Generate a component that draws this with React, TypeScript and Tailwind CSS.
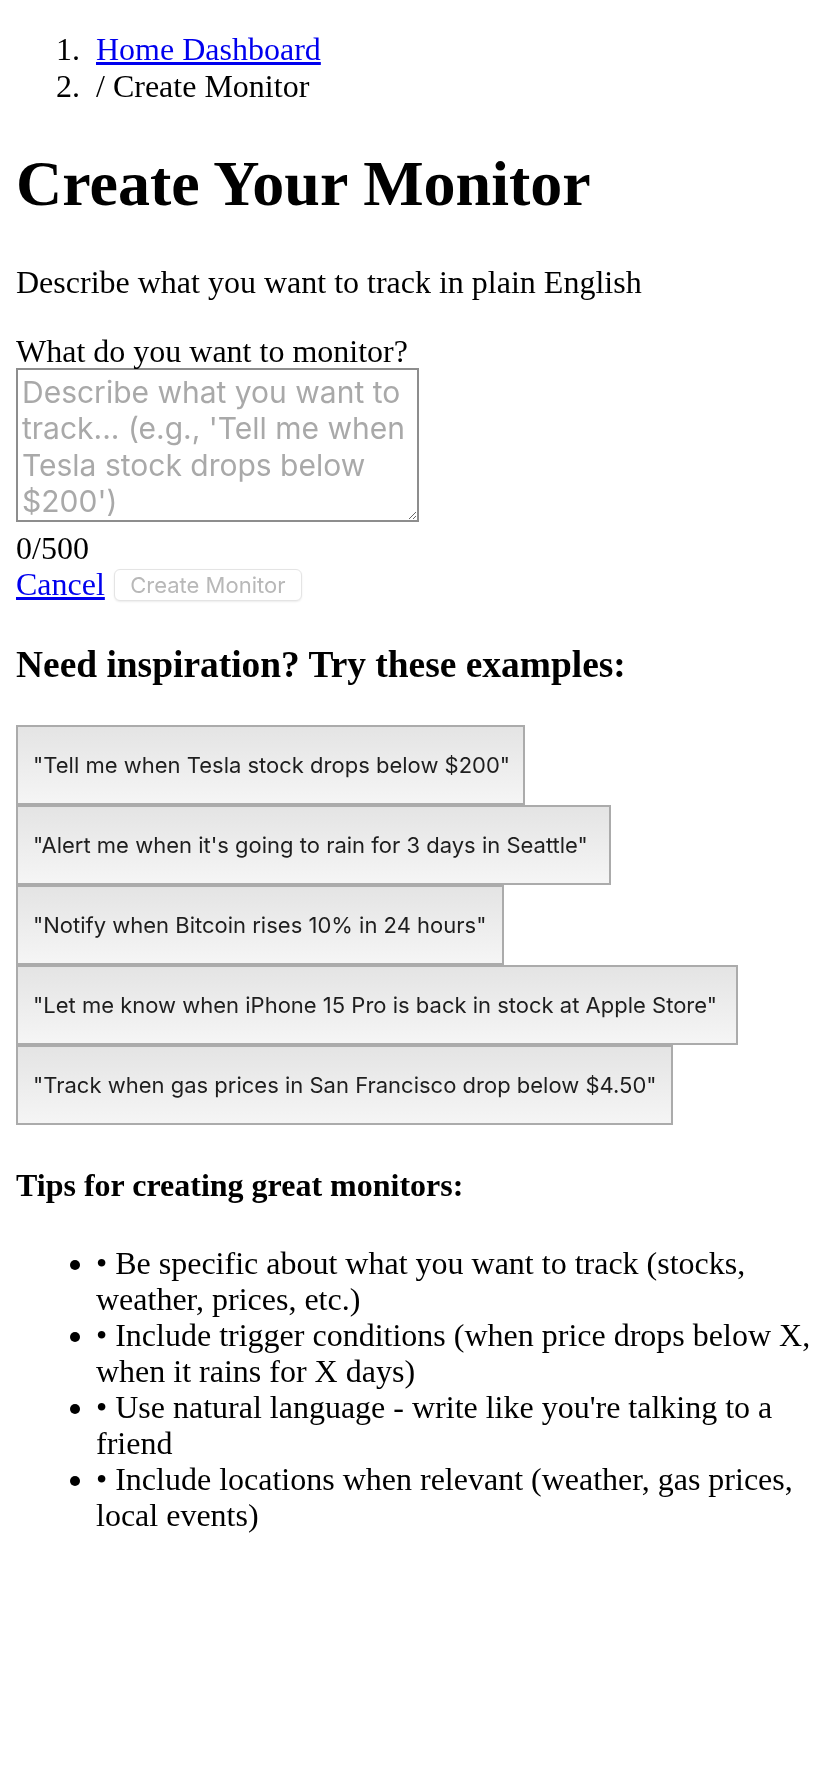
import React from "react";

const examples = [
  { text: '"Tell me when Tesla stock drops below $200"', w: "w-[509px]" },
  { text: '"Alert me when it\'s going to rain for 3 days in Seattle"', w: "w-[595px]" },
  { text: '"Notify when Bitcoin rises 10% in 24 hours"', w: "w-[488px]" },
  { text: '"Let me know when iPhone 15 Pro is back in stock at Apple Store"', w: "w-[722px]" },
  { text: '"Track when gas prices in San Francisco drop below $4.50"', w: "w-[657px]" },
];

const tips = [
  "• Be specific about what you want to track (stocks, weather, prices, etc.)",
  "• Include trigger conditions (when price drops below X, when it rains for X days)",
  "• Use natural language - write like you're talking to a friend",
  "• Include locations when relevant (weather, gas prices, local events)",
];

export default function App() {
  return (
    <div className="bg-white min-h-[1792px] px-4 pb-4 text-black font-['Liberation_Serif','Times_New_Roman',serif] text-[32px] leading-[1.15]">
      <nav>
        <ol className="mt-[31px] mb-[32px]">
          <li className="flex">
            <span className="w-[80px] pl-[40px] shrink-0">1.</span>
            <a href="#" className="text-[#0000ee] underline">
              Home Dashboard
            </a>
          </li>
          <li className="flex">
            <span className="w-[80px] pl-[40px] shrink-0">2.</span>
            <span>/ Create Monitor</span>
          </li>
        </ol>
      </nav>

      <h1 className="text-[64px] font-bold my-[42.88px] leading-[1.15]">Create Your Monitor</h1>
      <p className="my-[32px]">Describe what you want to track in plain English</p>

      <div className="my-[32px]">
        <label className="block" htmlFor="monitor">
          What do you want to monitor?
        </label>
        <textarea
          id="monitor"
          rows={4}
          className="block mt-[-2px] mb-[8px] w-[403px] h-[154px] border-2 border-[#8d8d8d] bg-white px-[4px] py-[4px] text-[30px] leading-[36.5px] text-black font-['Inter','Liberation_Sans',sans-serif] placeholder:text-[#a9a9a9] outline-none"
          placeholder={"Describe what you want to\ntrack... (e.g., 'Tell me when\nTesla stock drops below\n$200')"}
        />
        <div>0/500</div>
        <div className="flex items-center gap-[9px] h-[36.8px]">
          <a href="#" className="text-[#0000ee] underline">
            Cancel
          </a>
          <button
            disabled
            className="w-[188px] h-[32px] rounded-[6px] border border-[#e4e4e4] bg-white shadow-[0_1px_2px_rgba(0,0,0,0.08)] text-[22px] leading-none text-[#b8b8b8] font-['Inter','Liberation_Sans',sans-serif] flex items-center justify-center"
          >
            Create Monitor
          </button>
        </div>
      </div>

      <h3 className="text-[37.44px] font-bold mt-[39.5px] mb-[39.5px] leading-[1.15]">
        Need inspiration? Try these examples:
      </h3>

      <div className="flex flex-col items-start">
        {examples.map((e) => (
          <button
            key={e.text}
            className={`${e.w} h-[80px] border-2 border-[#ababab] bg-linear-to-b from-[#e4e4e4] to-[#f5f5f5] pl-[15px] text-left text-[22px] leading-none text-[#1e1e1e] font-['Inter','Liberation_Sans',sans-serif] whitespace-nowrap`}
          >
            {e.text}
          </button>
        ))}
      </div>

      <h4 className="text-[32px] font-bold mt-[41.5px] mb-[42px] leading-[1.15]">Tips for creating great monitors:</h4>

      <ul className="list-disc pl-[80px] my-[42px] leading-[36px]">
        {tips.map((t) => (
          <li key={t}>{t}</li>
        ))}
      </ul>
    </div>
  );
}
